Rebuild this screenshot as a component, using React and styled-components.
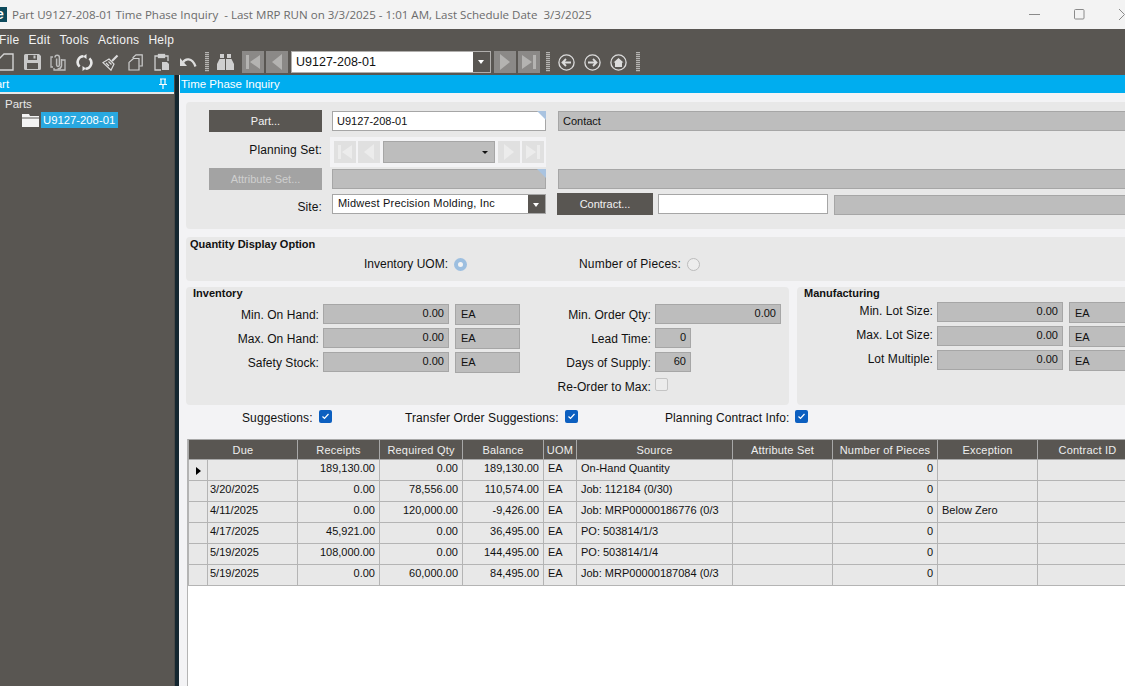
import React from 'react'
import styled, { createGlobalStyle } from 'styled-components'

const GlobalStyle = createGlobalStyle`
    html, body {
        margin: 0;
        padding: 0;
        height: 100%;
        overflow: hidden;
        background: #f3f3f5;
    }
    #root {
        height: 100%;
    }
    * {
        box-sizing: border-box;
    }
`

const rows = [
    { due: '', receipts: '189,130.00', required: '0.00', balance: '189,130.00', source: 'On-Hand Quantity', exception: '', current: true },
    { due: '3/20/2025', receipts: '0.00', required: '78,556.00', balance: '110,574.00', source: 'Job: 112184 (0/30)', exception: '' },
    { due: '4/11/2025', receipts: '0.00', required: '120,000.00', balance: '-9,426.00', source: 'Job: MRP00000186776 (0/3', exception: 'Below Zero' },
    { due: '4/17/2025', receipts: '45,921.00', required: '0.00', balance: '36,495.00', source: 'PO: 503814/1/3', exception: '' },
    { due: '5/19/2025', receipts: '108,000.00', required: '0.00', balance: '144,495.00', source: 'PO: 503814/1/4', exception: '' },
    { due: '5/19/2025', receipts: '0.00', required: '60,000.00', balance: '84,495.00', source: 'Job: MRP00000187084 (0/3', exception: '' },
]

const NewIcon = () => (
    <svg width="16" height="18" viewBox="0 0 16 18" fill="none" stroke="#d4d4d4" strokeWidth="1.4">
        <path d="M6 1h9v16H1V6z" />
    </svg>
)

const SaveIcon = () => (
    <svg width="17" height="16" viewBox="0 0 17 16" fill="#c8c8c8">
        <path d="M0 1.5A1.5 1.5 0 0 1 1.5 0H15l2 2v12.5a1.5 1.5 0 0 1-1.5 1.5h-14A1.5 1.5 0 0 1 0 14.5zM4 1v5h9V1zM3 9v6h11V9z" fillRule="evenodd" />
        <rect x="9.5" y="1.5" width="2" height="3" />
    </svg>
)

const AttachIcon = () => (
    <svg width="16" height="17" viewBox="0 0 16 17" fill="none" stroke="#bdbdbd" strokeWidth="1.3">
        <path d="M3 3H1v10h2M12 6h3v10H4v-2" />
        <path d="M5 3.5a2.2 2.2 0 0 1 4.4 0V11a1.4 1.4 0 0 1-2.8 0V4.5M11.5 5v7a4 4 0 0 1-4 3" strokeWidth="1.5" />
    </svg>
)

const RefreshIcon = () => (
    <svg width="17" height="17" viewBox="0 0 17 17" fill="none" stroke="#e8e8e8" strokeWidth="2.6">
        <path d="M7.5 2.2A6 6 0 0 0 3.6 12.6" />
        <path d="M9.5 14.8a6 6 0 0 0 3.9-10.4" />
        <path d="M10.5 0v5l-3.5-2.5zM6.5 17v-5l3.5 2.5z" fill="#e8e8e8" stroke="none" />
    </svg>
)

const BroomIcon = () => (
    <svg width="17" height="17" viewBox="0 0 17 17" fill="none" stroke="#dcdcdc" strokeWidth="1.2">
        <path d="M10 7l5.5-5.5" strokeWidth="2.2" />
        <path d="M7 5l5 5-3 6.2L1 8.6z" />
        <path d="M4 9l3 3M6.5 7.5l3 3" />
    </svg>
)

const CopyIcon = () => (
    <svg width="16" height="17" viewBox="0 0 16 17" fill="none" stroke="#cfcfcf" strokeWidth="1.2">
        <path d="M5 4V3.6L8 .8h6.2V12H11.5" />
        <path d="M5.5 4.5L1 8.4V16h10V4.5z" />
    </svg>
)

const PasteIcon = () => (
    <svg width="16" height="18" viewBox="0 0 16 18" fill="none" stroke="#cfcfcf" strokeWidth="1.3">
        <path d="M4 3H1v14h6M11 3h3v5" />
        <rect x="4.5" y="1.5" width="6" height="3" fill="#cfcfcf" />
        <path d="M8 9h5l2 2v6H8z" fill="#cfcfcf" stroke="none" />
    </svg>
)

const UndoIcon = () => (
    <svg width="17" height="12" viewBox="0 0 17 12" fill="none" stroke="#dcdcdc" strokeWidth="2.2">
        <path d="M3 6.5C5 2.5 12 1 15.5 10.5" />
        <path d="M0 2v8h7z" fill="#dcdcdc" stroke="none" />
    </svg>
)

const BinocularsIcon = () => (
    <svg width="17" height="16" viewBox="0 0 17 16" fill="#cfcfcf">
        <path d="M3 0h4v4H3zM10 0h4v4h-4z" />
        <path d="M2.5 5h5.5v11H0v-6zM9 5h5.5l2.5 5v6H9z" />
    </svg>
)

const arrowShapes = {
    first: 'M4 4h3v14H4zM18 4v14L8 11z',
    prev: 'M16 3v16L6 11z',
    next: 'M6 3v16l10-8z',
    last: 'M4 4v14l10-7zM15 4h3v14h-3z',
}

const NavArrow = ({ type, color }) => (
    <svg width="22" height="22" viewBox="0 0 22 22" fill={color}>
        <path d={arrowShapes[type]} />
    </svg>
)

const CircleIcon = ({ children }) => (
    <svg width="17" height="17" viewBox="0 0 17 17" fill="none" stroke="#dcdcdc" strokeWidth="1.3">
        <circle cx="8.5" cy="8.5" r="7.6" />
        {children}
    </svg>
)

const Check = () => (
    <svg width="9" height="9" viewBox="0 0 9 9" fill="none" stroke="#ffffff" strokeWidth="1.2">
        <path d="M1.5 4.5l2 2 4-4.5" />
    </svg>
)

const App = () => {
    return (
        <>
            <GlobalStyle />
            <Window>
                <TitleBar>
                    <AppLogo>e</AppLogo>
                    <TitleText>Part U9127-208-01 Time Phase Inquiry&nbsp; - Last MRP RUN on 3/3/2025 - 1:01 AM, Last Schedule Date&nbsp; 3/3/2025</TitleText>
                    <WindowControls>
                        <svg width="11" height="11" viewBox="0 0 11 11" stroke="#8a8a8a" fill="none"><path d="M0 5.5h11" /></svg>
                        <svg width="11" height="11" viewBox="0 0 11 11" stroke="#8a8a8a" fill="none"><rect x="0.5" y="0.5" width="9.5" height="9.5" rx="1" /></svg>
                        <svg width="11" height="11" viewBox="0 0 11 11" stroke="#8a8a8a" fill="none"><path d="M0 0l5.5 5.5L0 11" /></svg>
                    </WindowControls>
                </TitleBar>

                <MenuBar>
                    <MenuItem>File</MenuItem>
                    <MenuItem>Edit</MenuItem>
                    <MenuItem>Tools</MenuItem>
                    <MenuItem>Actions</MenuItem>
                    <MenuItem>Help</MenuItem>
                </MenuBar>

                <ToolBar>
                    <ToolSlot><NewIcon /></ToolSlot>
                    <ToolSlot><SaveIcon /></ToolSlot>
                    <ToolSlot><AttachIcon /></ToolSlot>
                    <ToolSlot><RefreshIcon /></ToolSlot>
                    <ToolSlot><BroomIcon /></ToolSlot>
                    <ToolSlot><CopyIcon /></ToolSlot>
                    <ToolSlot><PasteIcon /></ToolSlot>
                    <ToolSlot><UndoIcon /></ToolSlot>
                    <Grip />
                    <ToolSlot><BinocularsIcon /></ToolSlot>
                    <NavGroup>
                        <NavButton><NavArrow type="first" color="#b4b3b1" /></NavButton>
                        <NavButton><NavArrow type="prev" color="#b4b3b1" /></NavButton>
                        <ToolCombo>
                            <ToolComboText>U9127-208-01</ToolComboText>
                            <ComboArrow />
                        </ToolCombo>
                        <NavButton><NavArrow type="next" color="#b4b3b1" /></NavButton>
                        <NavButton><NavArrow type="last" color="#b4b3b1" /></NavButton>
                    </NavGroup>
                    <Grip />
                    <RoundTools>
                        <CircleIcon><path d="M13 8.5H5M8 5L4.5 8.5 8 12" strokeWidth="1.8" /></CircleIcon>
                        <CircleIcon><path d="M4 8.5h8M9 5l3.5 3.5L9 12" strokeWidth="1.8" /></CircleIcon>
                        <CircleIcon><path d="M3.5 8.5l5-4.5 5 4.5h-1.5v4.5H5V8.5z" fill="#dcdcdc" stroke="none" /></CircleIcon>
                    </RoundTools>
                    <Grip />
                </ToolBar>

                <WorkArea>
                    <SidePanel>
                        <SideHeader>
                            <SideTitle>Part</SideTitle>
                            <svg width="8" height="11" viewBox="0 0 8 11" fill="none" stroke="#ffffff" strokeWidth="1.2">
                                <path d="M1 1h6M2 1v5M6 1v5M0 6.5h8M4 7v4" />
                            </svg>
                        </SideHeader>
                        <Tree>
                            <TreeRoot>Parts</TreeRoot>
                            <TreeNode>
                                <svg width="17" height="13" viewBox="0 0 17 13" fill="#f4f4f4">
                                    <path d="M0 0h7l1 2h9v1.5H0zM0 4.5h17V13H0z" />
                                </svg>
                                <TreeLabel>U9127-208-01</TreeLabel>
                            </TreeNode>
                        </Tree>
                    </SidePanel>
                    <Divider />
                    <Main>
                        <MainHeader>Time Phase Inquiry</MainHeader>

                        <FormPanel>
                            <FormRow $top={8}>
                                <LabelCell><FormButton>Part...</FormButton></LabelCell>
                                <Field $marked>U9127-208-01</Field>
                                <Field $readOnly>Contact</Field>
                            </FormRow>
                            <FormRow $top={5} $height={30}>
                                <LabelCell><RowLabel $shift={-2}>Planning Set:</RowLabel></LabelCell>
                                <PlanningStrip>
                                    <NavButton $muted><NavArrow type="first" color="#ececec" /></NavButton>
                                    <NavButton $muted><NavArrow type="prev" color="#ececec" /></NavButton>
                                    <PlanningSelect><SmallArrow /></PlanningSelect>
                                    <NavButton $muted><NavArrow type="next" color="#ececec" /></NavButton>
                                    <NavButton $muted><NavArrow type="last" color="#ececec" /></NavButton>
                                </PlanningStrip>
                            </FormRow>
                            <FormRow $top={1}>
                                <LabelCell><FormButton $disabled>Attribute Set...</FormButton></LabelCell>
                                <Field $readOnly $marked />
                                <Field $readOnly />
                            </FormRow>
                            <FormRow $top={3}>
                                <LabelCell><RowLabel $shift={3}>Site:</RowLabel></LabelCell>
                                <SiteSelect>
                                    <SiteText>Midwest Precision Molding, Inc</SiteText>
                                    <ComboArrow />
                                </SiteSelect>
                                <ContractGroup>
                                    <ContractButton>Contract...</ContractButton>
                                    <ContractInput />
                                    <Field $readOnly />
                                </ContractGroup>
                            </FormRow>
                        </FormPanel>

                        <OptionPanel>
                            <GroupTitle $left={4}>Quantity Display Option</GroupTitle>
                            <OptionRow>
                                <Option>
                                    <span>Inventory UOM:</span>
                                    <Radio $on />
                                </Option>
                                <Option>
                                    <span>Number of Pieces:</span>
                                    <Radio />
                                </Option>
                            </OptionRow>
                        </OptionPanel>

                        <GroupRow>
                            <InventoryPanel>
                                <GroupTitle $left={7} $tight>Inventory</GroupTitle>
                                <InventoryGrid>
                                    <FieldColumn>
                                        <QtyRow><QtyLabel>Min. On Hand:</QtyLabel><QtyValue>0.00</QtyValue><UnitBox>EA</UnitBox></QtyRow>
                                        <QtyRow><QtyLabel>Max. On Hand:</QtyLabel><QtyValue>0.00</QtyValue><UnitBox>EA</UnitBox></QtyRow>
                                        <QtyRow><QtyLabel>Safety Stock:</QtyLabel><QtyValue>0.00</QtyValue><UnitBox>EA</UnitBox></QtyRow>
                                    </FieldColumn>
                                    <FieldColumn>
                                        <QtyRow><QtyLabel $narrow>Min. Order Qty:</QtyLabel><QtyValue>0.00</QtyValue></QtyRow>
                                        <QtyRow><QtyLabel $narrow>Lead Time:</QtyLabel><QtyValue $short>0</QtyValue></QtyRow>
                                        <QtyRow><QtyLabel $narrow>Days of Supply:</QtyLabel><QtyValue $short>60</QtyValue></QtyRow>
                                        <QtyRow><QtyLabel $narrow>Re-Order to Max:</QtyLabel><EmptyBox /></QtyRow>
                                    </FieldColumn>
                                </InventoryGrid>
                            </InventoryPanel>
                            <ManufacturingPanel>
                                <GroupTitle $left={7} $tight>Manufacturing</GroupTitle>
                                <LotColumn>
                                    <QtyRow><QtyLabel $lot>Min. Lot Size:</QtyLabel><QtyValue>0.00</QtyValue><UnitBox $lot>EA</UnitBox></QtyRow>
                                    <QtyRow><QtyLabel $lot>Max. Lot Size:</QtyLabel><QtyValue>0.00</QtyValue><UnitBox $lot>EA</UnitBox></QtyRow>
                                    <QtyRow><QtyLabel $lot>Lot Multiple:</QtyLabel><QtyValue>0.00</QtyValue><UnitBox $lot>EA</UnitBox></QtyRow>
                                </LotColumn>
                            </ManufacturingPanel>
                        </GroupRow>

                        <CheckRow>
                            <CheckItem><span>Suggestions:</span><CheckBox><Check /></CheckBox></CheckItem>
                            <CheckItem><span>Transfer Order Suggestions:</span><CheckBox><Check /></CheckBox></CheckItem>
                            <CheckItem><span>Planning Contract Info:</span><CheckBox><Check /></CheckBox></CheckItem>
                        </CheckRow>

                        <GridArea>
                            <Table>
                                <colgroup>
                                    <col width="19" />
                                    <col width="90" />
                                    <col width="82" />
                                    <col width="83" />
                                    <col width="81" />
                                    <col width="33" />
                                    <col width="156" />
                                    <col width="100" />
                                    <col width="105" />
                                    <col width="100" />
                                    <col width="100" />
                                </colgroup>
                                <thead>
                                    <tr>
                                        <HeadCell colSpan={2}>Due</HeadCell>
                                        <HeadCell>Receipts</HeadCell>
                                        <HeadCell>Required Qty</HeadCell>
                                        <HeadCell>Balance</HeadCell>
                                        <HeadCell>UOM</HeadCell>
                                        <HeadCell>Source</HeadCell>
                                        <HeadCell>Attribute Set</HeadCell>
                                        <HeadCell>Number of Pieces</HeadCell>
                                        <HeadCell>Exception</HeadCell>
                                        <HeadCell>Contract ID</HeadCell>
                                    </tr>
                                </thead>
                                <tbody>
                                    {rows.map((row, i) => (
                                        <tr key={i}>
                                            <SelectorCell>{row.current && <RowPointer />}</SelectorCell>
                                            <Cell $tightLeft>{row.due}</Cell>
                                            <Cell $right>{row.receipts}</Cell>
                                            <Cell $right>{row.required}</Cell>
                                            <Cell $right>{row.balance}</Cell>
                                            <Cell>EA</Cell>
                                            <Cell>{row.source}</Cell>
                                            <Cell />
                                            <Cell $right>0</Cell>
                                            <Cell>{row.exception}</Cell>
                                            <Cell />
                                        </tr>
                                    ))}
                                </tbody>
                            </Table>
                        </GridArea>
                    </Main>
                </WorkArea>
            </Window>
        </>
    )
}

export default App

const Window = styled.div`
    display: flex;
    flex-direction: column;
    width: 1125px;
    height: 686px;
    overflow: hidden;
    font-family: "Liberation Sans", Arial, sans-serif;
    font-size: 12px;
    color: #111111;
`

const TitleBar = styled.div`
    display: flex;
    align-items: center;
    flex: 0 0 29px;
    background: #f3f3f3;
`

const AppLogo = styled.div`
    width: 14px;
    height: 15px;
    margin-left: -7px;
    background: #0d4a5c;
    color: #ffffff;
    font-size: 14px;
    font-weight: 700;
    line-height: 14px;
    text-align: center;
`

const TitleText = styled.div`
    margin-left: 5px;
    font-family: "Open Sans", sans-serif;
    font-size: 11.55px;
    color: #6b6b6b;
    white-space: nowrap;
`

const WindowControls = styled.div`
    display: flex;
    gap: 34px;
    margin-left: auto;
    margin-right: -5px;
    & svg { display: block; }
`

const MenuBar = styled.div`
    display: flex;
    align-items: center;
    gap: 9px;
    flex: 0 0 22px;
    margin-left: -1px;
    background: #595652;
`

const MenuItem = styled.div`
    font-size: 12px;
    letter-spacing: 0.3px;
    color: #f2f2f2;
`

const ToolBar = styled.div`
    display: flex;
    align-items: flex-start;
    flex: 0 0 24px;
    background: #595652;
    & > :first-child { margin-left: -7px; }
`

const ToolSlot = styled.div`
    display: flex;
    align-items: center;
    justify-content: center;
    width: 26px;
    height: 22px;
`

const Grip = styled.div`
    width: 4px;
    height: 20px;
    margin: 1px 3px 0 4px;
    background: repeating-linear-gradient(to bottom, #b5b4b2 0 1px, #6f6c68 1px 2px);
`

const NavGroup = styled.div`
    display: flex;
    align-items: center;
    gap: 2px;
    margin: 0 2px 0 4px;
`

const NavButton = styled.div`
    width: 22px;
    height: 22px;
    background: ${props => props.$muted ? '#e0e0e0' : '#8b8987'};
    & svg { display: block; }
`

const ToolCombo = styled.div`
    display: flex;
    width: 200px;
    height: 22px;
    margin: 0 1px;
    border: 1px solid #b0aeac;
    background: #ffffff;
`

const ToolComboText = styled.div`
    flex: 1;
    padding-left: 4px;
    font-size: 12.5px;
    line-height: 20px;
`

const ComboArrow = styled.div`
    position: relative;
    flex: 0 0 17px;
    background: #595652;
    &::after {
        content: '';
        position: absolute;
        left: 5px;
        top: 8px;
        border-left: 3.5px solid transparent;
        border-right: 3.5px solid transparent;
        border-top: 4px solid #ffffff;
    }
`

const RoundTools = styled.div`
    display: flex;
    align-items: center;
    gap: 9px;
    height: 22px;
    margin: 0 5px 0 5px;
    & svg { display: block; }
`

const WorkArea = styled.div`
    display: flex;
    flex: 1;
    min-height: 0;
`

const SidePanel = styled.div`
    flex: 0 0 174px;
    background: #595652;
`

const SideHeader = styled.div`
    display: flex;
    align-items: center;
    justify-content: space-between;
    height: 19px;
    padding-right: 7px;
    border-bottom: 2px solid #e8e8e8;
    background: #00adef;
    color: #ffffff;
    overflow: hidden;
`

const SideTitle = styled.span`
    margin-left: -12px;
    font-size: 11.5px;
`

const Tree = styled.div`
    padding: 3px 0 0 5px;
    color: #e8e8e8;
`

const TreeRoot = styled.div`
    height: 15px;
    line-height: 15px;
    font-size: 11.5px;
`

const TreeNode = styled.div`
    display: flex;
    align-items: center;
    gap: 2px;
    margin-left: 17px;
`

const TreeLabel = styled.div`
    width: 77px;
    height: 16px;
    padding-left: 2px;
    background: #29a8e0;
    color: #ffffff;
    font-size: 11.3px;
    line-height: 16px;
    white-space: nowrap;
`

const Divider = styled.div`
    flex: 0 0 5px;
    background: linear-gradient(to right, #4a4a48 0 1px, #14262f 1px);
`

const Main = styled.div`
    display: flex;
    flex-direction: column;
    flex: 1;
    min-width: 0;
    overflow: hidden;
    background: #f3f3f5;
`

const MainHeader = styled.div`
    flex: 0 0 18px;
    margin-left: 1px;
    padding-left: 1px;
    background: #00adef;
    color: #ffffff;
    font-size: 11.5px;
    line-height: 18px;
`

const Panel = styled.div`
    background: #e8e8e8;
    border-radius: 4px;
`

const FormPanel = styled(Panel)`
    flex: 0 0 127px;
    margin: 9px -10px 0 7px;
`

const FormRow = styled.div`
    display: grid;
    grid-template-columns: 136px 214px 1fr;
    column-gap: 10px;
    align-items: center;
    height: ${props => props.$height || 22}px;
    margin-top: ${props => props.$top}px;
    & > :nth-child(3) { margin-left: 2px; }
`

const LabelCell = styled.div`
    display: flex;
    justify-content: flex-end;
`

const FormButton = styled.div`
    width: 113px;
    height: 22px;
    background: ${props => props.$disabled ? '#a3a3a3' : '#595652'};
    color: ${props => props.$disabled ? '#cfcfcf' : '#f2f2f2'};
    font-size: 11px;
    line-height: 22px;
    text-align: center;
`

const RowLabel = styled.div`
    font-size: 12px;
    letter-spacing: 0.1px;
    margin-top: ${props => props.$shift * 2}px;
`

const Field = styled.div`
    position: relative;
    height: 20px;
    padding-left: 4px;
    border: 1px solid #a6a6a6;
    background: ${props => props.$readOnly ? '#bdbdbd' : '#ffffff'};
    font-size: 11px;
    line-height: 18px;
    ${props => props.$marked && `
        &::after {
            content: '';
            position: absolute;
            top: -1px;
            right: -1px;
            border-top: 9px solid #a9c3e0;
            border-left: 9px solid transparent;
        }
    `}
`

const PlanningStrip = styled.div`
    display: flex;
    align-items: center;
    gap: 2px;
    height: 30px;
    margin-left: -2px;
    width: 216px;
    padding-left: 4px;
    background: #f3f3f5;
`

const PlanningSelect = styled.div`
    position: relative;
    width: 112px;
    height: 22px;
    margin: 0 1px;
    border: 1px solid #a6a6a6;
    background: #bdbdbd;
`

const SmallArrow = styled.div`
    position: absolute;
    right: 6px;
    top: 9px;
    border-left: 3px solid transparent;
    border-right: 3px solid transparent;
    border-top: 3px solid #111111;
`

const SiteSelect = styled.div`
    display: flex;
    height: 20px;
    border: 1px solid #a6a6a6;
    background: #ffffff;
`

const SiteText = styled.div`
    flex: 1;
    padding-left: 5px;
    font-size: 11px;
    letter-spacing: 0.2px;
    line-height: 17px;
    white-space: nowrap;
`

const ContractGroup = styled.div`
    display: flex;
    align-items: center;
    gap: 5px;
    transform: translateX(-1px);
    & > :last-child { flex: 1; margin-left: 1px; margin-top: 2px; }
`

const ContractButton = styled.div`
    flex: 0 0 96px;
    height: 22px;
    background: #595652;
    color: #f2f2f2;
    font-size: 11px;
    line-height: 22px;
    text-align: center;
`

const ContractInput = styled.div`
    flex: 0 0 170px;
    height: 20px;
    border: 1px solid #a6a6a6;
    background: #ffffff;
`

const OptionPanel = styled(Panel)`
    flex: 0 0 44px;
    margin: 8px -10px 0 7px;
`

const GroupTitle = styled.div`
    padding-left: ${props => props.$left}px;
    font-size: 11px;
    font-weight: 700;
    line-height: ${props => props.$tight ? 13 : 15}px;
`

const OptionRow = styled.div`
    display: grid;
    grid-template-columns: 215px 1fr;
    padding: 5px 0 0 178px;
`

const Option = styled.div`
    display: flex;
    align-items: center;
    gap: 6px;
    letter-spacing: 0.2px;
    &:first-child { letter-spacing: 0; }
`

const Radio = styled.div`
    width: 13px;
    height: 13px;
    border-radius: 50%;
    ${props => props.$on
        ? 'border: 4px solid #9dbfe0; background: #f4f4f4;'
        : 'border: 1px solid #bcbcbc; background: #ededed;'}
`

const GroupRow = styled.div`
    display: flex;
    gap: 8px;
    flex: 0 0 118px;
    margin: 6px -10px 0 7px;
`

const InventoryPanel = styled(Panel)`
    flex: 0 0 603px;
`

const ManufacturingPanel = styled(Panel)`
    flex: 1;
`

const InventoryGrid = styled.div`
    display: flex;
    padding-top: 4px;
`

const FieldColumn = styled.div`
    display: flex;
    flex-direction: column;
`

const LotColumn = styled(FieldColumn)`
    padding-top: 2px;
`

const QtyRow = styled.div`
    display: flex;
    align-items: flex-start;
    height: 24px;
`

const QtyLabel = styled.div`
    width: ${props => props.$lot ? 136 : props.$narrow ? 131 : 133}px;
    text-align: right;
    letter-spacing: 0.05px;
    line-height: ${props => props.$lot ? 19 : 22}px;
    white-space: nowrap;
`

const QtyValue = styled.div`
    width: ${props => props.$short ? 36 : 126}px;
    height: 20px;
    margin: 0 6px 0 4px;
    padding-right: 4px;
    border: 1px solid #a6a6a6;
    background: #bdbdbd;
    font-size: 11px;
    line-height: 16px;
    text-align: right;
`

const UnitBox = styled.div`
    width: 65px;
    height: 21px;
    padding-left: 5px;
    border: 1px solid #a6a6a6;
    background: #bdbdbd;
    font-size: 11px;
    line-height: ${props => props.$lot ? 21 : 19}px;
`

const EmptyBox = styled.div`
    width: 13px;
    height: 13px;
    margin: 2px 0 0 4px;
    border: 1px solid #c4c4c4;
    border-radius: 2px;
    background: #ececec;
`

const CheckRow = styled.div`
    display: grid;
    grid-template-columns: 163px 260px 1fr;
    align-items: flex-start;
    flex: 0 0 34px;
    padding: 5px 0 0 63px;
`

const CheckItem = styled.div`
    display: flex;
    align-items: flex-start;
    gap: 6px;
    letter-spacing: 0.1px;
    & > span { padding-top: 1px; line-height: 14px; }
`

const CheckBox = styled.div`
    display: flex;
    align-items: center;
    justify-content: center;
    width: 13px;
    height: 13px;
    border-radius: 2px;
    background: #0c5fc0;
`

const GridArea = styled.div`
    flex: 1;
    margin-left: 8px;
    border-left: 1px solid #b4b4b4;
    background: #ffffff;
`

const Table = styled.table`
    width: 949px;
    table-layout: fixed;
    border-collapse: collapse;
    font-size: 11px;
`

const HeadCell = styled.th`
    height: 20px;
    padding: 0;
    border: 1px solid #a8a8a8;
    background: #595652;
    color: #eeeeee;
    font-size: 11px;
    font-weight: 400;
    letter-spacing: 0.2px;
    text-align: center;
    white-space: nowrap;
`

const Cell = styled.td`
    height: 21px;
    padding: 0 4px 4px ${props => props.$tightLeft ? 2 : 4}px;
    border: 1px solid #b4b4b4;
    background: #e8e8e8;
    text-align: ${props => props.$right ? 'right' : 'left'};
    white-space: nowrap;
    overflow: hidden;
`

const SelectorCell = styled.td`
    height: 21px;
    padding: 2px 0 0;
    border: 1px solid #b4b4b4;
    background: #e8e8e8;
`

const RowPointer = styled.div`
    width: 0;
    height: 0;
    margin-left: 7px;
    border-top: 4.5px solid transparent;
    border-bottom: 4.5px solid transparent;
    border-left: 5px solid #000000;
`
